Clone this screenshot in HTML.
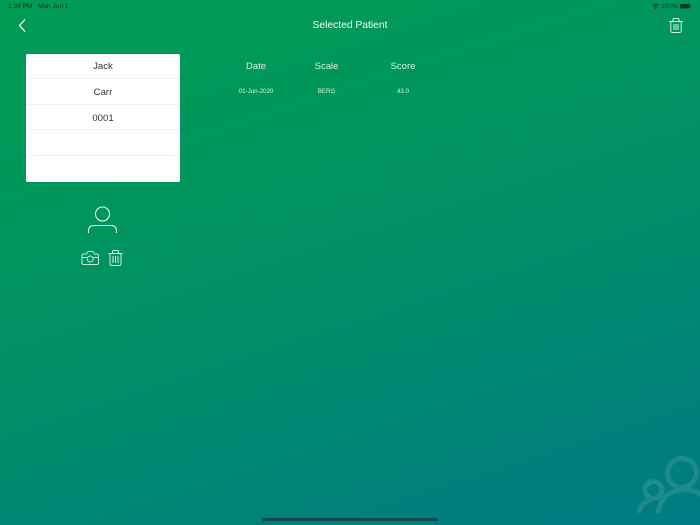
<!DOCTYPE html>
<html><head><meta charset="utf-8"><style>
html,body{margin:0;padding:0}
body{width:700px;height:525px;overflow:hidden;position:relative;font-family:"Liberation Sans",sans-serif;background:linear-gradient(162deg,#009c54 0%,#00985a 25%,#008e69 55%,#00807c 85%,#007b85 100%)}
.t{position:absolute;white-space:nowrap;line-height:1}
.c{transform:translateX(-50%)}
svg{position:absolute;left:0;top:0}
.card{position:absolute;left:26px;top:54px;width:154px;height:128px;background:#fff;border-radius:2px}
.line{position:absolute;left:0;width:154px;height:1px;background:#f1f2f2}
.v{position:absolute;left:0;width:154px;text-align:center;font-size:9.6px;line-height:12px;color:#333}
</style></head><body>
<div class="t" style="left:8px;top:4px;font-size:6.5px;color:#0b3320">1:34 PM</div>
<div class="t" style="left:38px;top:4px;font-size:6.5px;color:#0b3320">Mon Jun 1</div>
<div class="t" style="left:661px;top:4px;font-size:6.5px;color:#0b3320">100%</div>
<div class="t c" style="left:350px;top:21px;font-size:10.3px;color:#f2fbf6">Selected Patient</div>
<div class="card">
<div class="v" style="top:6.500px">Jack</div>
<div class="line" style="top:24px"></div>
<div class="v" style="top:33px">Carr</div>
<div class="line" style="top:50px"></div>
<div class="v" style="top:59px">0001</div>
<div class="line" style="top:75px"></div>
<div class="line" style="top:101px"></div>
</div>
<div class="t c" style="left:256px;top:62px;font-size:9.5px;color:#d5efe2">Date</div>
<div class="t c" style="left:326.5px;top:62px;font-size:9.5px;color:#d5efe2">Scale</div>
<div class="t c" style="left:403px;top:62px;font-size:9.5px;color:#d5efe2">Score</div>
<div class="t c" style="left:256px;top:89px;font-size:6.2px;color:#d5efe2">01-Jun-2020</div>
<div class="t c" style="left:326.5px;top:89px;font-size:6.2px;color:#d5efe2">BERG</div>
<div class="t c" style="left:403px;top:89px;font-size:6.2px;color:#d5efe2">43.0</div>
<svg width="700" height="525" viewBox="0 0 700 525" fill="none">
<path d="M25 19.500L19.500 25.500L25 31.500" stroke="#fff" stroke-width="1.200"/>
<path d="M652.500 5.300a5 5 0 0 1 6.400 0M653.800 6.600a3 3 0 0 1 3.800 0" stroke="#0b3320" stroke-width="1"/>
<circle cx="655.700" cy="8" r=".9" fill="#0b3320"/>
<rect x="680" y="4" width="10" height="4.400" rx="1" fill="#0b3320"/>
<rect x="690.400" y="5.200" width=".7" height="2" fill="#0b3320"/>
<g stroke="#d5efe2" stroke-width="1">
<path d="M669 21.500H683M673 21.500V19.500Q673 18.500 674 18.500H678Q679 18.500 679 19.500V21.500"/>
<path d="M670.800 21.500V30.500Q670.800 32.500 672.800 32.500H679.200Q681.200 32.500 681.200 30.500V21.500"/>
<path d="M674 24V30M676 24V30M678 24V30"/>
</g>
<g stroke="#e6f6ee" stroke-width="1.100">
<circle cx="102.500" cy="214" r="7"/>
<path d="M88.500 233V231Q88.500 225.500 94 225.500H111Q116.500 225.500 116.500 231V233"/>
</g>
<g stroke="#c5e6d6" stroke-width="1">
<path d="M82 255.500Q82 254 83.500 254H86.500L88 251.500H93L94.500 254H97Q98.500 254 98.500 255.500V263Q98.500 264.500 97 264.500H83.500Q82 264.500 82 263Z"/>
<circle cx="90.200" cy="259" r="3"/>
<path d="M82 257.500H87M93.500 257.500H98.500"/>
</g>
<g stroke="#d5efe2" stroke-width="1">
<path d="M108.500 253.500H122.500M112.500 253.500V251.500Q112.500 250.500 113.500 250.500H117.500Q118.500 250.500 118.500 251.500V253.500"/>
<path d="M110 253.500V263.500Q110 265.500 112 265.500H119Q121 265.500 121 263.500V253.500"/>
<path d="M113 256V263M115.500 256V263M118 256V263"/>
</g>
<g stroke="#2a9292" stroke-width="5" opacity=".7">
<circle cx="682" cy="473" r="14.500"/>
<path d="M658 513C660 497 672 489.500 684 489.500C692 489.500 698 492 703 496"/>
<circle cx="653.500" cy="490" r="8.500"/>
<path d="M639 513C640 506 645 501 652 499.500"/>
</g>
<rect x="262" y="518" width="176" height="3" rx="1.500" fill="#0e4a50"/>
</svg>
</body></html>
